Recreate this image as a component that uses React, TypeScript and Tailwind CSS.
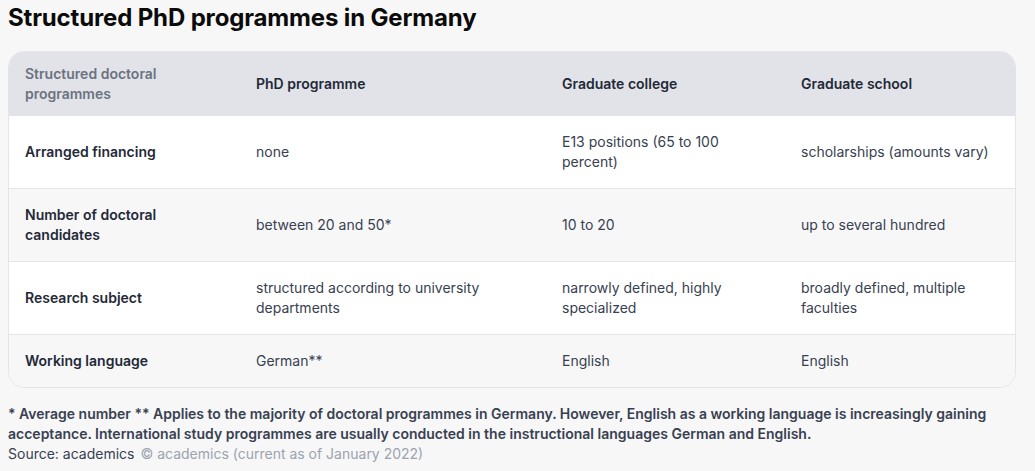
import React from "react";

const rows: [string, string, string, string][] = [
  ["Arranged financing", "none", "E13 positions (65 to 100 percent)", "scholarships (amounts vary)"],
  ["Number of doctoral candidates", "between 20 and 50*", "10 to 20", "up to several hundred"],
  ["Research subject", "structured according to university departments", "narrowly defined, highly specialized", "broadly defined, multiple faculties"],
  ["Working language", "German**", "English", "English"],
];

const heights = ["h-[72px]", "h-[73px]", "h-[73px]", "h-[53px]"];

export default function App() {
  return (
    <div
      className="min-h-[471px] w-[1035px] bg-[#f7f7f7] px-2 pt-[2px] text-[#1f2937]"
      style={{ fontFamily: "Inter, 'Noto Sans', sans-serif" }}
    >
      <h1 className="text-[24px] font-bold leading-[32px] tracking-[-0.15px] text-[#0b0b0b]">
        Structured PhD programmes in Germany
      </h1>
      <div className="mt-[17px] w-[1008px] overflow-hidden rounded-2xl border border-[#e4e5e9]">
        <table className="w-full table-fixed border-collapse text-[14px] leading-[20px]">
          <colgroup>
            <col className="w-[231px]" />
            <col className="w-[306px]" />
            <col className="w-[239px]" />
            <col className="w-[230px]" />
          </colgroup>
          <thead>
            <tr className="h-[64px] bg-[#e2e3e8] text-left">
              <th className="px-4 align-middle font-semibold text-[#6b7280]">
                Structured doctoral programmes
              </th>
              <th className="px-4 align-middle font-semibold text-[#1f2937]">PhD programme</th>
              <th className="px-4 align-middle font-semibold text-[#1f2937]">Graduate college</th>
              <th className="px-4 align-middle font-semibold text-[#1f2937]">Graduate school</th>
            </tr>
          </thead>
          <tbody>
            {rows.map((r, i) => (
              <tr
                key={i}
                className={`${i % 2 === 0 ? "bg-white" : "bg-[#f7f7f8]"} ${heights[i]} ${
                  i === rows.length - 1 ? "" : "border-b border-[#e4e5e9]"
                }`}
              >
                <td className="px-4 align-middle font-semibold text-[#1f2937]">{r[0]}</td>
                <td className="px-4 align-middle text-[#374151]">{r[1]}</td>
                <td className="px-4 align-middle text-[#374151]">{r[2]}</td>
                <td className="px-4 align-middle text-[#374151]">{r[3]}</td>
              </tr>
            ))}
          </tbody>
        </table>
      </div>
      <div className="mt-[16px] text-[14px] leading-[20px]">
        <p className="font-semibold text-[#374151]">
          * Average number ** Applies to the majority of doctoral programmes in Germany. However, English as a
          working language is increasingly gaining acceptance. International study programmes are usually
          conducted in the instructional languages German and English.
        </p>
        <p className="text-[#374151]">
          Source: academics <span className="ml-[2px] text-[#9ca3af]">© academics (current as of January 2022)</span>
        </p>
      </div>
    </div>
  );
}
